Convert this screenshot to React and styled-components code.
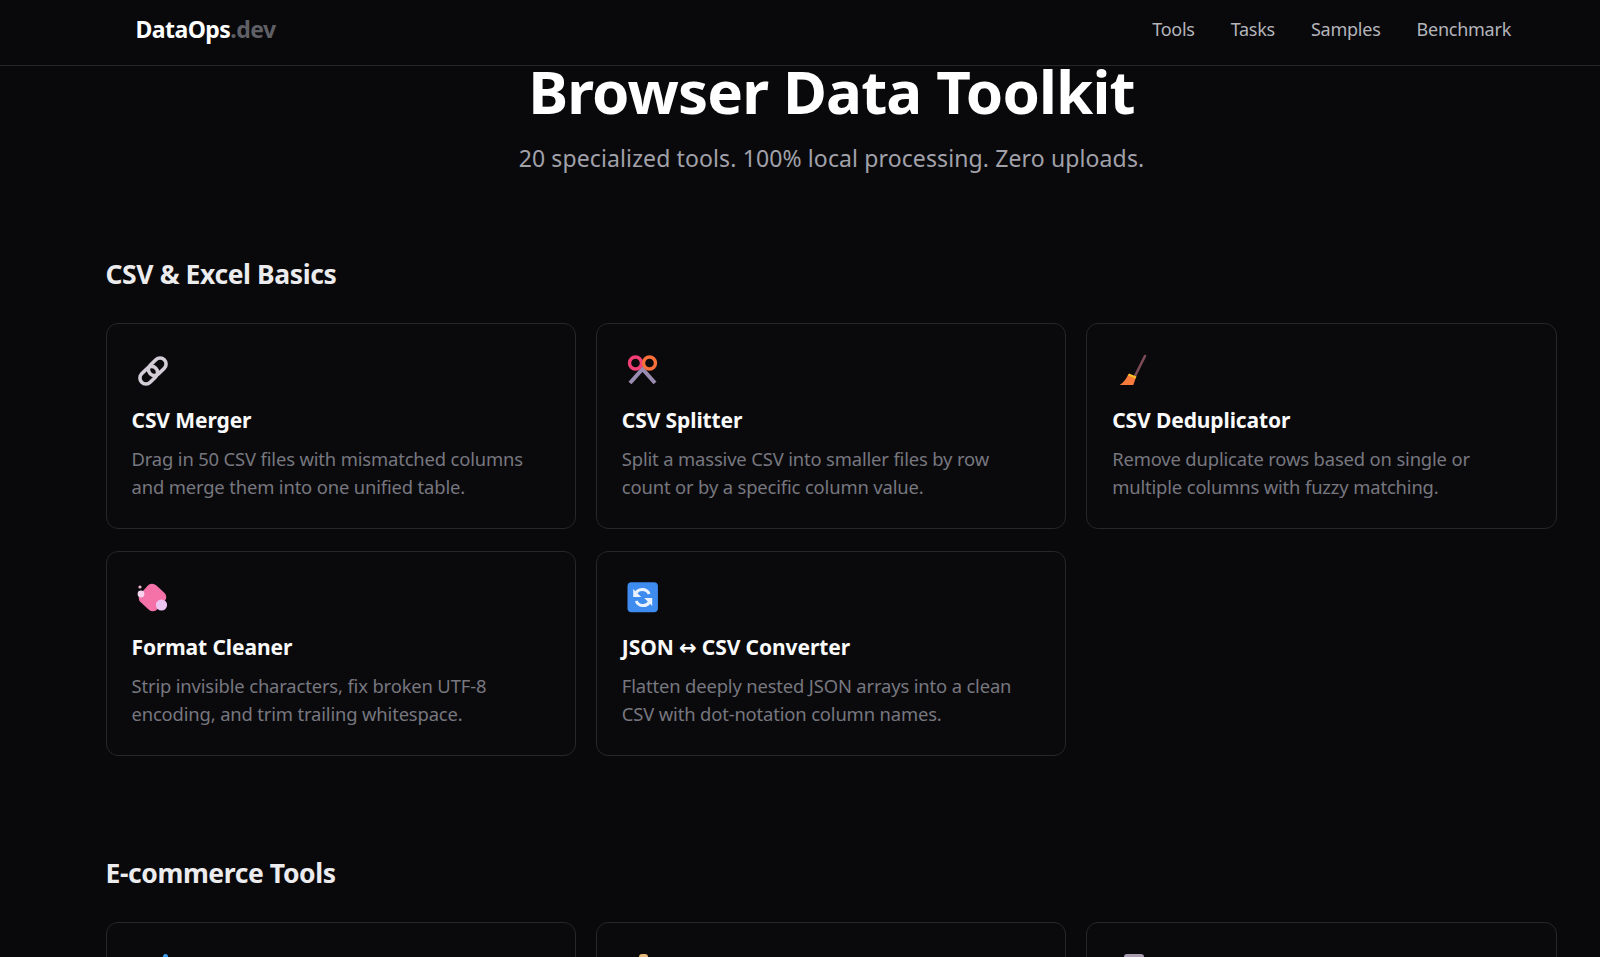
import React from 'react';
import styled, { createGlobalStyle } from 'styled-components';

const Global = createGlobalStyle`
  html, body { margin: 0; padding: 0; height: 957px; overflow: hidden; background: #09090b; }
  body { font-family: "Noto Sans", "DejaVu Sans", sans-serif; color: #fff; }
  * { box-sizing: border-box; }
`;
const Nav = styled.nav`
  height: 66px; border-bottom: 1px solid #27272a; background: #09090b;
  display: flex; align-items: center; justify-content: space-between;
  padding: 0 89px 7px 135.5px;
`;
const Logo = styled.div`
  font-size: 23px; line-height: 30px; margin-top: -1px; font-weight: 700; letter-spacing: -0.55px; color: #fff;
  span { color: #5f5f66; }
`;
const Links = styled.div`display: flex; gap: 36px;`;
const NavLink = styled.a`font-size: 18px; color: #b4b4bb; letter-spacing: -0.25px;`;
const Main = styled.main`padding: 0 43.5px 0 105.5px;`;
const Hero = styled.header`text-align: center; margin-left: 1px;`;
const Title = styled.h1`
  margin: 0; font-size: 60px; line-height: 50px; font-weight: 700; letter-spacing: -0.85px; color: #fff; white-space: nowrap;
`;
const Sub = styled.p`margin: 26px 0 0; font-size: 23px; line-height: 32px; color: #a1a1aa; letter-spacing: 0.12px;`;
const SectionTitle = styled.h2`margin: 0 0 31px; font-size: 26.500px; line-height: 36px; font-weight: 700; letter-spacing: -0.4px; color: #ececef;`;
const Section = styled.section`margin-top: ${p => p.$top}px;`;
const Grid = styled.div`display: grid; grid-template-columns: repeat(3, 1fr); gap: 22px 20px;`;
const Card = styled.article`
  height: 205.5px; border: 1px solid #27272a; border-radius: 12px; background: #0a0a0d; padding: 30px 25px 0;
`;
const IconBox = styled.div`height: 34px; width: 34px; margin-left: 4px;`;
const CardTitle = styled.h3`margin: 16.5px 0 0; font-size: 21px; line-height: 30px; font-weight: 700; letter-spacing: -0.1px; color: #fafafa; white-space: nowrap;`;
const Desc = styled.p`margin: 10px 0 0; font-size: 18.4px; line-height: 28px; color: #77777f; letter-spacing: -0.15px;`;

const LinkIcon = () => (
  <svg width="34" height="34" viewBox="0 0 34 34" fill="none">
    <g transform="rotate(-45 17 17)" stroke="#d3cdd8" strokeWidth="3.6">
      <rect x="1" y="11" width="20" height="12" rx="6" />
      <rect x="13" y="11" width="20" height="12" rx="6" />
    </g>
  </svg>
);
const ScissorsIcon = () => (
  <svg width="34" height="34" viewBox="0 0 34 34" fill="none">
    <path d="M4 29 16.500 15 29 29" stroke="#9a8bb0" strokeWidth="4" />
    <circle cx="9.500" cy="9" r="6" stroke="#f43f76" strokeWidth="3.400" />
    <circle cx="23.500" cy="9" r="6" stroke="#f9703a" strokeWidth="3.400" />
  </svg>
);
const BroomIcon = () => (
  <svg width="34" height="34" viewBox="0 0 34 34" fill="none">
    <path d="M29 2 19 22" stroke="#7a4a55" strokeWidth="2.600" strokeLinecap="round" />
    <path d="M12.300 20.300 20 23.300 17.300 31 3.700 31q6-4 8.600-10.700z" fill="#f97b3c" />
    <path d="M12.500 20.500 20 23.500" stroke="#fbbf24" strokeWidth="2.400" />
  </svg>
);
const SoapIcon = () => (
  <svg width="34" height="34" viewBox="0 0 34 34">
    <rect x="5" y="4" width="23" height="23" rx="6" transform="rotate(42 16.500 15.500)" fill="#f472a8" />
    <circle cx="5" cy="12" r="3.400" fill="#f6d4ee" />
    <circle cx="4" cy="5" r="1.600" fill="#e9b9cf" />
    <circle cx="25.500" cy="23" r="5.600" fill="#ecc5f2" />
  </svg>
);
const SyncIcon = () => (
  <svg width="34" height="34" viewBox="0 0 34 34" fill="none">
    <rect x="1.500" y="0.300" width="30.400" height="30" rx="4" fill="#3f8cf0" />
    <path d="M23.200 12a7.500 7.500 0 0 0-13-1.500M10.200 19a7.500 7.500 0 0 0 13 1.500" stroke="#e9f2fe" strokeWidth="3" />
    <path d="M7.200 7v8h8zM26.200 24v-8h-8z" fill="#e9f2fe" />
  </svg>
);
const Peek = ({ c, x, w }) => (
  <svg width="34" height="34" viewBox="0 0 34 34"><rect x={x} y="1" width={w} height="12" rx="3" fill={c} /></svg>
);

const basics = [
  [LinkIcon, 'CSV Merger', 'Drag in 50 CSV files with mismatched columns and merge them into one unified table.'],
  [ScissorsIcon, 'CSV Splitter', 'Split a massive CSV into smaller files by row count or by a specific column value.'],
  [BroomIcon, 'CSV Deduplicator', 'Remove duplicate rows based on single or multiple columns with fuzzy matching.'],
  [SoapIcon, 'Format Cleaner', 'Strip invisible characters, fix broken UTF-8 encoding, and trim trailing whitespace.'],
  [SyncIcon, 'JSON ↔ CSV Converter', 'Flatten deeply nested JSON arrays into a clean CSV with dot-notation column names.'],
];

export default function App() {
  return (
    <>
      <Global />
      <Nav>
        <Logo>DataOps<span>.dev</span></Logo>
        <Links>
          {['Tools', 'Tasks', 'Samples', 'Benchmark'].map(l => <NavLink key={l}>{l}</NavLink>)}
        </Links>
      </Nav>
      <Main>
        <Hero>
          <Title>Browser Data Toolkit</Title>
          <Sub>20 specialized tools. 100% local processing. Zero uploads.</Sub>
        </Hero>
        <Section $top={82}>
          <SectionTitle>CSV &amp; Excel Basics</SectionTitle>
          <Grid>
            {basics.map(([I, t, d]) => (
              <Card key={t}>
                <IconBox><I /></IconBox>
                <CardTitle>{t}</CardTitle>
                <Desc>{d}</Desc>
              </Card>
            ))}
          </Grid>
        </Section>
        <Section $top={99}>
          <SectionTitle>E-commerce Tools</SectionTitle>
          <Grid>
            <Card><IconBox><Peek c="#3b9cf0" x={27} w={5} /></IconBox></Card>
            <Card><IconBox><Peek c="#e8b878" x={13} w={9} /></IconBox></Card>
            <Card><IconBox><Peek c="#a99bb0" x={8} w={20} /></IconBox></Card>
          </Grid>
        </Section>
      </Main>
    </>
  );
}
